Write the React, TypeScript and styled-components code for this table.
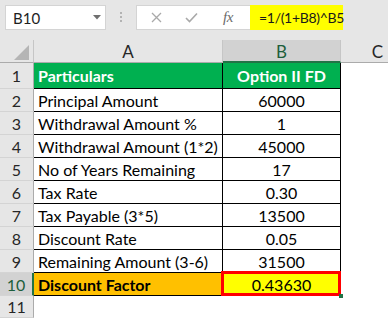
import React from "react";
import styled, { createGlobalStyle } from "styled-components";

const GlobalStyle = createGlobalStyle`
  html, body { margin: 0; padding: 0; background: #fff; }
  body { font-family: Lato, "Liberation Sans", sans-serif; }
  * { box-sizing: border-box; }
`;

const GREEN = "#217346";

const Page = styled.div`
  width: 388px;
  height: 318px;
  overflow: hidden;
  display: flex;
  flex-direction: column;
  background: #fff;
`;

const TopBar = styled.div`
  height: 40px;
  flex: none;
  background: #e6e6e6;
  display: flex;
  align-items: flex-start;
  padding: 5px 0 0 5px;
`;

const NameBox = styled.div`
  width: 101px;
  height: 25px;
  background: #fff;
  border: 1px solid #d4d4d4;
  display: flex;
  align-items: center;
  justify-content: space-between;
  padding: 0 4px 0 7px;
  font-size: 15px;
  color: #1e1e1e;
`;

const Dots = styled.div`
  width: 3px;
  margin: 7px 13px 0 14px;
  display: flex;
  flex-direction: column;
  gap: 2px;
  & > span {
    width: 2px;
    height: 2px;
    background: #b3b3b3;
  }
`;

const ButtonBox = styled.div`
  width: 114px;
  height: 25px;
  background: #fff;
  border: 1px solid #d4d4d4;
  border-right: none;
  display: flex;
  align-items: center;
  padding-left: 14px;
`;

const IconSlot = styled.span<{ $w: number }>`
  width: ${(p) => p.$w}px;
  display: flex;
  align-items: center;
  justify-content: flex-start;
`;

const Fx = styled.span`
  font-family: "Liberation Serif", serif;
  font-style: italic;
  font-size: 15px;
  color: #6b6b6b;
  letter-spacing: -0.5px;
`;

const FormulaInput = styled.div`
  width: 93px;
  height: 25px;
  background: #ffff00;
  display: flex;
  align-items: center;
  padding-left: 9px;
  font-size: 14px;
  letter-spacing: -0.3px;
  color: #1a1a1a;
  white-space: nowrap;
`;

const Sheet = styled.div`
  flex: 1;
  display: grid;
  grid-template-columns: 34px 189px 118px 74px;
  grid-template-rows: 23px 26px repeat(9, 23px) 1fr;
`;

const Corner = styled.div`
  background: #e6e6e6;
  border-right: 1px solid #c6c6c6;
  border-bottom: 1px solid #ababab;
  display: flex;
  align-items: flex-end;
  justify-content: flex-end;
  padding: 0 4px 2px 0;
`;

const ColHeader = styled.div<{ $selected?: boolean }>`
  background: ${(p) => (p.$selected ? "#d2d2d2" : "#e6e6e6")};
  border-right: 1px solid #c6c6c6;
  border-bottom: ${(p) => (p.$selected ? `2px solid ${GREEN}` : "1px solid #ababab")};
  color: ${(p) => (p.$selected ? "#1d5e3b" : "#262626")};
  font-size: 17px;
  display: flex;
  align-items: center;
  justify-content: center;
  padding-top: 1px;
`;

const RowHeader = styled.div<{ $selected?: boolean }>`
  background: ${(p) => (p.$selected ? "#d2d2d2" : "#e6e6e6")};
  border-right: ${(p) => (p.$selected ? `2px solid ${GREEN}` : "1px solid #ababab")};
  border-bottom: 1px solid #d4d4d4;
  color: ${(p) => (p.$selected ? "#1d5e3b" : "#262626")};
  font-size: 16px;
  display: flex;
  align-items: center;
  justify-content: center;
`;

const Cell = styled.div<{ $fill?: string; $bold?: boolean; $center?: boolean; $ink?: string }>`
  position: relative;
  background: ${(p) => p.$fill ?? "#fff"};
  border-right: 1px solid #000;
  border-bottom: 1px solid #000;
  color: ${(p) => p.$ink ?? "#000"};
  font-weight: ${(p) => (p.$bold ? 700 : 400)};
  font-size: 16px;
  display: flex;
  align-items: center;
  justify-content: ${(p) => (p.$center ? "center" : "flex-start")};
  padding: 0 4px;
  white-space: nowrap;
`;

const Blank = styled.div`
  background: #fff;
`;

const ActiveFrame = styled.span`
  position: absolute;
  top: -2px;
  left: -2px;
  right: -1px;
  bottom: -1px;
  border: 3px solid #ff0000;
  z-index: 1;
  pointer-events: none;
`;

const FillHandle = styled.span`
  position: absolute;
  right: -3px;
  bottom: -3px;
  width: 4px;
  height: 4px;
  background: ${GREEN};
  z-index: 2;
`;

type Row = { label: string; value: string };

const rows: Row[] = [
  { label: "Principal Amount", value: "60000" },
  { label: "Withdrawal Amount %", value: "1" },
  { label: "Withdrawal Amount (1*2)", value: "45000" },
  { label: "No of Years Remaining", value: "17" },
  { label: "Tax Rate", value: "0.30" },
  { label: "Tax Payable (3*5)", value: "13500" },
  { label: "Discount Rate", value: "0.05" },
  { label: "Remaining Amount (3-6)", value: "31500" },
];

const CrossIcon = () => (
  <svg width="11" height="11" viewBox="0 0 11 11">
    <path d="M1 1 L10 10 M10 1 L1 10" stroke="#a9a9a9" strokeWidth="1.3" fill="none" />
  </svg>
);

const CheckIcon = () => (
  <svg width="13" height="11" viewBox="0 0 13 11">
    <path d="M1 6 L4.5 9.5 L12 1.5" stroke="#a9a9a9" strokeWidth="1.6" fill="none" />
  </svg>
);

const DropArrow = () => (
  <svg width="8" height="5" viewBox="0 0 8 5">
    <path d="M0 0 H8 L4 4.5 Z" fill="#6f6f6f" />
  </svg>
);

const CornerMark = () => (
  <svg width="15" height="15" viewBox="0 0 15 15">
    <path d="M15 0 V15 H0 Z" fill="#b5b5b5" />
  </svg>
);

export default function App() {
  return (
    <Page>
      <GlobalStyle />
      <TopBar>
        <NameBox>
          <span>B10</span>
          <DropArrow />
        </NameBox>
        <Dots>
          <span />
          <span />
          <span />
        </Dots>
        <ButtonBox>
          <IconSlot $w={34}>
            <CrossIcon />
          </IconSlot>
          <IconSlot $w={38}>
            <CheckIcon />
          </IconSlot>
          <IconSlot $w={20}>
            <Fx>fx</Fx>
          </IconSlot>
        </ButtonBox>
        <FormulaInput>=1/(1+B8)^B5</FormulaInput>
      </TopBar>

      <Sheet>
        <Corner>
          <CornerMark />
        </Corner>
        <ColHeader>A</ColHeader>
        <ColHeader $selected>B</ColHeader>
        <ColHeader>C</ColHeader>

        <RowHeader>1</RowHeader>
        <Cell $fill="#00b050" $ink="#fff" $bold>
          Particulars
        </Cell>
        <Cell $fill="#00b050" $ink="#fff" $bold $center>
          Option II FD
        </Cell>
        <Blank />

        {rows.map((r, i) => (
          <React.Fragment key={r.label}>
            <RowHeader>{i + 2}</RowHeader>
            <Cell>{r.label}</Cell>
            <Cell $center>{r.value}</Cell>
            <Blank />
          </React.Fragment>
        ))}

        <RowHeader $selected>10</RowHeader>
        <Cell $fill="#ffc000" $bold>
          Discount Factor
        </Cell>
        <Cell $fill="#ffff00" $center>
          0.43630
          <ActiveFrame />
          <FillHandle />
        </Cell>
        <Blank />

        <RowHeader>11</RowHeader>
        <Blank />
        <Blank />
        <Blank />
      </Sheet>
    </Page>
  );
}
